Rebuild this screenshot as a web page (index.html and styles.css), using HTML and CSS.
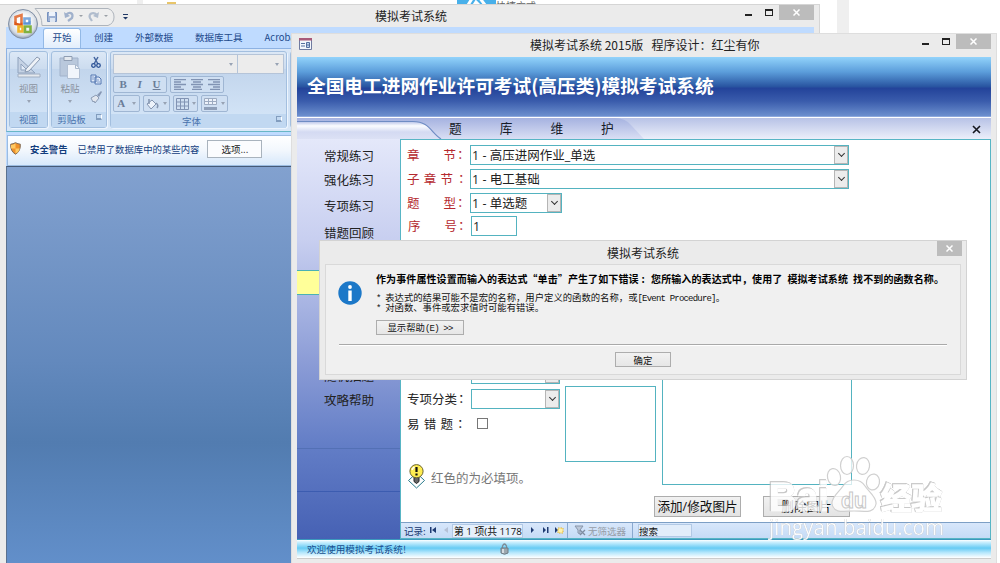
FILE: index.html
```html
<!DOCTYPE html>
<html lang="zh-CN">
<head>
  <meta charset="UTF-8">
  <meta name="viewport" content="width=device-width, initial-scale=1.0">
  <title>模拟考试系统</title>
  <link rel="stylesheet" href="styles.css">
</head>
<body>
  <div class="desktop">
    <!-- Fondo detrás de las ventanas -->
    <div class="backdrop">
      <span class="strip strip-left"></span>
      <span class="folder"></span>
      <span class="shortcut"><svg width="39" height="5"><path d="M11 5 16-3h6l6 8M17 5l2-3 3 3" fill="none" stroke="#fff" stroke-width="3"/></svg></span>
      <span class="shortcut-text">快捷方式</span>
      <span class="strip strip-right"></span>
    </div>

    <!-- Ventana principal de Access -->
    <div class="window access">
      <div class="access-title">
        <div class="quick">
          <svg width="90" height="20" viewBox="0 0 90 20">
            <path d="M1 .5h73a9 9 0 0 1 0 17H8Q8 7 1 .5z" fill="#eee" stroke="#aeb4bc"/>
            <path d="M13.500 4.500h9v9h-9z" fill="#9db1d4" stroke="#7590be"/>
            <path d="M15 4h6v4h-6z" fill="#eef3fb"/><path d="M16 10h5v4h-5z" fill="#dfe7f2"/>
            <path d="M32 7c3-4 8-2 6 3l-4 3" fill="none" stroke="#a0b1cc" stroke-width="2.200"/><path d="m30 4 1 6 5-2z" fill="#a0b1cc"/>
            <path d="M63 7c-4-4-9-1-7 3l2 3" fill="none" stroke="#b0bccd" stroke-width="2.200"/><path d="m65 4-1 6-5-2z" fill="#b0bccd"/>
            <path d="M45 7h4l-2 2zM70 7h4l-2 2z" fill="#9a9fa6"/>
          </svg>
          <svg class="more" width="5" height="6"><path d="M0 0h5v1H0zM0 3h5L2.500 5.500z" fill="#1f3865"/></svg>
        </div>
        <div class="caption">模拟考试系统</div>
        <div class="controls">
          <span class="min"></span><span class="max"></span>
          <span class="close"><svg width="7" height="7"><path d="m.5.5 6 6m0-6-6 6" stroke="#fff" stroke-width="1.500"/></svg></span>
        </div>
      </div>
      <svg class="orb" width="32" height="32" viewBox="0 0 32 32">
        <defs>
          <radialGradient id="orb" cx=".5" cy=".45" r=".55"><stop offset=".4" stop-color="#fff"/><stop offset=".8" stop-color="#d4dae3"/><stop offset="1" stop-color="#8d9bb0"/></radialGradient>
        </defs>
        <circle cx="16" cy="16" r="14.500" fill="url(#orb)" stroke="#8290a5"/>
        <g fill="none" stroke-width="2.600">
          <path d="m8.500 9 6-2v10l-6-1z" stroke="#dd5a1c"/>
          <path d="M17.500 10.500h5v5h-5z" stroke="#5b93d5"/>
          <path d="M11.500 18.500h4v5h-4z" stroke="#f0b52b"/>
          <path d="M18 18.500h5.500V24H18z" stroke="#7fb241"/>
        </g>
        <path d="M4 12Q15 18 28 11A13 13 0 0 0 4 12z" fill="#fff" opacity=".2"/>
      </svg>

      <div class="client">
        <div class="tabs">
          <span class="tab active">开始</span>
          <span class="tab t2">创建</span>
          <span class="tab t3">外部数据</span>
          <span class="tab t4">数据库工具</span>
          <span class="tab t5">Acrobat</span>
        </div>
        <div class="ribbon">
          <div class="group g-view">
            <div class="group-body big">
              <svg width="26" height="24" viewBox="0 0 26 24">
                <path d="M2 2v16h17z" fill="#c5d2e4" stroke="#8fa2bd"/><path d="M5 9v6h6z" fill="#e4edf8" stroke="#8fa2bd"/>
                <path d="M2 19h22v3H2z" fill="#e5e9ee" stroke="#a0aec2"/><path d="m10 14 11-12 3 2-11 12-4 1z" fill="#eef2f7" stroke="#8a9ab2"/>
              </svg>
              <span>视图</span><i class="arrow"></i>
            </div>
            <div class="group-name">视图</div>
          </div>
          <div class="group g-clip">
            <div class="group-body clip">
              <div class="big">
                <svg width="24" height="24" viewBox="0 0 24 24">
                  <path d="M2 3h18v18H2z" fill="#b9c8dc" stroke="#a1b2cb"/><path d="M6 1.500h8v4H6z" fill="#e4e9ef" stroke="#8f9db2"/>
                  <path d="M9.500 9.500h8l4 4v10h-12z" fill="#f1f5fb" stroke="#b1bfd3"/><path d="M17.500 9.500v4h4" fill="none" stroke="#a8b8cc"/>
                </svg>
                <span>粘贴</span><i class="arrow"></i>
              </div>
              <div class="clip-side">
                <svg width="12" height="13" viewBox="0 0 12 13"><path d="m4 1 4 7M8 1 4 8" stroke="#44659f" stroke-width="1.500"/><circle cx="3.500" cy="9.500" r="1.800" fill="none" stroke="#2d5498" stroke-width="1.300"/><circle cx="8.500" cy="9.500" r="1.800" fill="none" stroke="#2d5498" stroke-width="1.300"/></svg>
                <svg width="12" height="12" viewBox="0 0 12 12"><path d="M1 1h5v7H1zM5 3h4l2 2v5H5z" fill="#dfe9f8" stroke="#5376b1"/><path d="M2 3h2M2 5h2M7 6h2M7 8h3" stroke="#7f9dcd"/></svg>
                <svg width="12" height="12" viewBox="0 0 12 12"><path d="m7 4 4-4 1 1-3 5z" fill="#8798b4"/><path d="M1 7l5-3 3 3-4 5-1-2-1 1-1-2z" fill="#e1e6ee" stroke="#8c9cb4"/></svg>
              </div>
            </div>
            <div class="group-name">剪贴板<i class="launch"></i></div>
          </div>
          <div class="group g-font">
            <div class="group-body">
              <div class="fields"><span class="field-font"><i class="arrow"></i></span><span class="field-size"><i class="arrow"></i></span></div>
              <div class="tools">
                <div class="tool w53"><b>B</b><em>I</em><u>U</u></div>
                <div class="tool w53">
                  <svg width="12" height="11"><path d="M0 .5h12M0 3h7M0 5.500h12M0 8h7M0 10.500h10" stroke="#8193b3" stroke-width="1.300"/></svg>
                  <svg width="12" height="11"><path d="M0 .5h12M2 3h8M0 5.500h12M2 8h8M1 10.500h10" stroke="#8193b3" stroke-width="1.300"/></svg>
                  <svg width="12" height="11"><path d="M0 .5h12M5 3h7M0 5.500h12M5 8h7M2 10.500h10" stroke="#8193b3" stroke-width="1.300"/></svg>
                </div>
              </div>
              <div class="tools">
                <div class="tool w27"><b>A</b><i class="arrow"></i></div>
                <div class="tool w27"><svg width="13" height="12"><path d="m1 6 5-4 4 4-5 5z" fill="#edf3fb" stroke="#8596b1"/><path d="M3 1v5M10 5q3 2 1 5" fill="none" stroke="#8596b1" stroke-width="1.500"/></svg><i class="arrow"></i></div>
                <div class="tool w25"><svg width="13" height="12"><path d="M.5.5h12v11H.5zM4.500 0v12M8.500 0v12M0 4h13M0 8h13" fill="none" stroke="#8193b3"/></svg><i class="arrow"></i></div>
                <div class="tool w27"><svg width="13" height="12"><path d="M.5.5h12v6H.5zM4.500 0v6M8.500 0v6M0 3.500h13" fill="#edf2fa" stroke="#9dabc1"/><path d="M0 9h13v3H0z" fill="#8f9fb8"/></svg><i class="arrow"></i></div>
              </div>
            </div>
            <div class="group-name">字体<i class="launch"></i></div>
          </div>
          <div class="group g-next"></div>
        </div>
        <div class="warning">
          <svg width="11" height="13" viewBox="0 0 11 13"><path d="M5.500.7Q8 2 10.300 2.200q.5 7-4.800 10Q.2 9.200.7 2.200 3 2 5.500.7z" fill="#f0912a" stroke="#7f6a55"/><path d="M5.500 1.500v5H1V3q2 0 4.500-1.500zM5.500 6.500H10q-1 3.500-4.500 5z" fill="#ffc962"/></svg>
          <strong>安全警告</strong>
          <span>已禁用了数据库中的某些内容</span>
          <button>选项...</button>
        </div>
        <div class="workspace"></div>
      </div>
    </div>

    <!-- Ventana del formulario -->
    <div class="window exam">
      <div class="exam-title">
        <svg width="13" height="12" viewBox="0 0 13 12"><path d="M.5.5h12v11H.5z" fill="#f4f7fc" stroke="#6f7ba0"/><path d="M0 0h13v2.500H0z" fill="#a85a79"/><path d="M2 5.500h4M2 8h4" stroke="#56709f"/><path d="M7.500 4.500h3v5h-3zM7.500 7h3" fill="#c0d2ee" stroke="#56709f"/></svg>
        <div class="caption">模拟考试系统 2015版&nbsp;&nbsp; 程序设计<span class="mid">：</span>红尘有你</div>
        <div class="controls">
          <span class="min"></span><span class="max"></span>
          <span class="close"><svg width="7" height="7"><path d="m.5.5 6 6m0-6-6 6" stroke="#fff" stroke-width="1.500"/></svg></span>
        </div>
      </div>
      <div class="exam-body">
        <h1 class="banner">全国电工进网作业许可考试(高压类)模拟考试系统</h1>
        <div class="menubar">
          <svg width="350" height="21" viewBox="0 0 350 21">
            <defs>
              <linearGradient id="mtab" x2="0" y2="1"><stop stop-color="#a5b2e0"/><stop offset="1" stop-color="#dadff4"/></linearGradient>
              <linearGradient id="ltab" x2="0" y2="1"><stop stop-color="#b9c3e8"/><stop offset=".25" stop-color="#fbfcff"/><stop offset=".6" stop-color="#d4daf2"/><stop offset="1" stop-color="#dce1f5"/></linearGradient>
            </defs>
            <path d="M0 0h318q10 0 16 7l13 14H0z" fill="url(#mtab)"/>
            <path d="M0 3.500h116c16 0 18 11 28 17.500H0z" fill="url(#ltab)"/>
            <path d="M0 3.500h116c16 0 18 11 28 17.500" fill="none" stroke="#6f8cc4" stroke-width="1.200"/>
          </svg>
          <div class="menu-name"><span>题</span><span>库</span><span>维</span><span>护</span></div>
          <svg class="menu-close" width="9" height="9"><path d="m1 1 7 7m0-7-7 7" stroke="#15171f" stroke-width="1.600"/></svg>
        </div>
        <div class="main">
          <ul class="sidebar">
            <li>常规练习</li>
            <li>强化练习</li>
            <li>专项练习</li>
            <li>错题回顾</li>
            <li class="current"></li>
            <li>随机抽题</li>
            <li>攻略帮助</li>
          </ul>
          <div class="panel">
            <div class="form">
              <div class="row"><label class="req"><span>章</span><span class="push">节</span><span class="mid">：</span></label><div class="combo wide">1 - 高压进网作业_单选<i></i></div></div>
              <div class="row"><label class="req spaced">子章节<span class="mid">：</span></label><div class="combo wide">1 - 电工基础<i></i></div></div>
              <div class="row"><label class="req"><span>题</span><span class="push">型</span><span class="mid">：</span></label><div class="combo type">1 - 单选题<i></i></div></div>
              <div class="row number"><label class="req"><span>序</span><span class="push">号</span><span class="mid">：</span></label><div class="combo num">1</div></div>
              <div class="memo"></div>
              <div class="lower">
                <div class="left">
                  <div class="row"><label></label><div class="combo cat"><i></i></div></div>
                  <div class="row second"><label>专项分类<span class="mid">：</span></label><div class="combo cat"><i></i></div></div>
                  <div class="row third"><label class="spaced">易错题<span class="mid">：</span></label><span class="check"></span></div>
                  <div class="hint">
                    <svg width="19" height="25" viewBox="0 0 19 25">
                      <path d="m9.500 9 8 7.500-8 7.500-8-7.500z" fill="#fff" stroke="#287a8c"/>
                      <path d="M7 13h5v4.500l-2.500 2-2.500-2z" fill="#666" stroke="#222"/>
                      <circle cx="9.500" cy="7.200" r="6.600" fill="#ffed50" stroke="#6b6433"/>
                      <path d="M5 6q1-2.500 2.500-3" fill="none" stroke="#fff" stroke-width="1.500"/><path d="M9.500 3v5M9.500 9.500v2" stroke="#111" stroke-width="2.200"/>
                    </svg>
                    <span>红色的为必填项。</span>
                  </div>
                </div>
                <div class="box small"></div>
                <div class="box large"></div>
              </div>
              <div class="buttons"><button>添加/修改图片</button><button>删除图片</button></div>
            </div>
            <div class="record">
              <span class="rec-label">记录:</span>
              <svg width="24" height="9" viewBox="0 0 24 9"><path d="M0 1h1.500v6H0zM6 1v6L2 4z" fill="#1f3b73"/><path d="M18 1v6l-4-3z" fill="#b5c1d6"/></svg>
              <span class="rec-pos">第 1 项(共 1178</span>
              <svg width="34" height="9" viewBox="0 0 34 9"><path d="M1 1v6l3-3zM13 1v6l3-3zM17 1h1.500v6H17zM25 1v6l3-3z" fill="#1f3b73"/><path d="M28 2h5v5h-5z" fill="#fff2ad" stroke="#e0b232" stroke-dasharray="1.500 1"/></svg>
              <span class="filter"><svg width="12" height="11" viewBox="0 0 12 11"><path d="M1 1h8L6 5v4L4 8V5z" fill="#bcc8d9" stroke="#8795ab"/><path d="m6 5 5 5m0-5-5 5" stroke="#7f8ca0" stroke-width="1.300"/></svg>无筛选器</span>
              <span class="search">搜索</span>
            </div>
          </div>
        </div>
        <div class="status">
          <span>欢迎使用模拟考试系统!</span>
          <svg width="9" height="12" viewBox="0 0 9 12"><path d="M2.500 6V3q2-4 4 0v3" fill="none" stroke="#7c8b96" stroke-width="1.300"/><path d="M1 5h7v5q-3.500 2.500-7 0z" fill="#9ba7ae" stroke="#6e7d86"/><path d="M3 6v4" stroke="#e7edf0" stroke-width="1.500"/></svg>
        </div>
      </div>
    </div>

    <!-- Cuadro de error -->
    <div class="window dialog">
      <div class="dialog-title">
        <div class="caption">模拟考试系统</div>
        <span class="close"><svg width="7" height="7"><path d="m.5.5 6 6m0-6-6 6" stroke="#fff" stroke-width="1.500"/></svg></span>
      </div>
      <div class="dialog-body">
        <div class="message">
          <svg width="24" height="24"><circle cx="12" cy="12" r="11.700" fill="#1c78c8"/><path d="M10.300 9.500h3.400V20h-3.400z" fill="#fff"/><circle cx="12" cy="6" r="1.900" fill="#fff"/></svg>
          <div class="message-text">
            <strong>作为事件属性设置而输入的表达式“单击”产生了如下错误<span class="colon">:</span> 您所输入的表达式中，使用了 模拟考试系统 找不到的函数名称。</strong>
            <p><span class="mono">* </span>表达式的结果可能不是宏的名称，用户定义的函数的名称，或<span class="mono">[Event Procedure]</span>。</p>
            <p><span class="mono">* </span>对函数、事件或宏求值时可能有错误。</p>
            <button class="help">显示帮助<span class="mono">(E) &gt;&gt;</span></button>
          </div>
        </div>
        <hr>
        <button class="ok">确定</button>
      </div>
    </div>

    <!-- Marca de agua -->
    <svg class="watermark" width="184" height="98" viewBox="0 0 184 98">
      <g class="wm-paw">
        <ellipse cx="66" cy="24" rx="6.500" ry="8.500" transform="rotate(-12 66 24)"/>
        <ellipse cx="79" cy="12.500" rx="6.500" ry="9"/>
        <ellipse cx="95" cy="13" rx="6.500" ry="8.500" transform="rotate(8 95 13)"/>
        <ellipse cx="105" cy="29" rx="6.500" ry="8" transform="rotate(12 105 29)"/>
        <path d="M75 33c5-8 17-8 22 0 3 5 12 11 11 18-2 10-12 7-22 7s-20 3-22-7c-1-7 8-13 11-18z"/>
      </g>
      <g class="wm-text">
        <text class="wm-logo" x="1" y="58" textLength="60" lengthAdjust="spacingAndGlyphs">Bai</text>
        <text class="wm-cn" x="113" y="56" textLength="61" lengthAdjust="spacingAndGlyphs">经验</text>
      </g>
      <text class="wm-du" x="73" y="55" textLength="26" lengthAdjust="spacingAndGlyphs">du</text>
      <text class="wm-url" x="1" y="82" textLength="175" lengthAdjust="spacingAndGlyphs">jingyan.baidu.com</text>
    </svg>
  </div>
</body>
</html>
```
FILE: styles.css
```css
/* Reset general */
* {
  box-sizing: border-box;
  margin: 0;
  padding: 0;
}

body {
  background: #fff;
  color: #222;
  font-family: "Noto Sans CJK SC", sans-serif;
  font-size: 12px;
}

svg {
  display: block;
  flex: none;
}

button {
  font-family: inherit;
  color: #111;
  white-space: nowrap;
}

.desktop {
  position: relative;
  width: 1000px;
  height: 563px;
  overflow: hidden;
}

/* Dos puntos centrados en su celda */
.mid {
  font-family: "Noto Sans CJK TC", sans-serif;
}

/* Fondo */
.backdrop {
  display: flex;
  height: 34px;
}

.strip {
  background: #efefef;
  width: 6px;
  margin-left: 137px;
}

.strip-right {
  width: 12px;
  margin-left: 300px;
}

.folder {
  width: 9px;
  height: 4px;
  margin-left: 24px;
  background: linear-gradient(#fff 60%, #e8c56a 60%);
}

.shortcut {
  width: 39px;
  height: 5px;
  margin-left: 281px;
  background: #48b0ea;
}

.shortcut-text {
  width: 41px;
  height: 5px;
  overflow: hidden;
  line-height: 12px;
  font-size: 10px;
  color: #666;
}

/* Ventanas */
.window {
  position: absolute;
  background: #ebebeb;
}

.controls {
  display: flex;
  align-items: flex-start;
}

.min {
  width: 7px;
  height: 2px;
  margin-top: 9px;
  background: #222;
}

.max {
  width: 8px;
  height: 7px;
  margin: 4px 6px 0 13px;
  border: 1px solid #222;
  border-top-width: 2px;
}

.close {
  display: flex;
  align-items: center;
  justify-content: center;
  width: 35px;
  height: 15px;
  background: #bcbcbc;
}

/* Access */
.access {
  left: 0;
  top: 4px;
  width: 820px;
  height: 559px;
  border-top: 1px solid #d5d5d5;
  border-right: 1px solid #d5d5d5;
}

.access-title {
  display: flex;
  height: 22px;
  padding-left: 34px;
}

.quick {
  display: flex;
  width: 341px;
  padding-top: 3px;
}

.more {
  margin: 6px 0 0 -1px;
}

.access-title .caption {
  width: 370px;
  line-height: 22px;
}

.orb {
  position: absolute;
  left: 7px;
  top: 3px;
}

.client {
  width: 808px;
  margin-left: 6px;
  background: #bfdbff;
}

.tabs {
  display: flex;
  height: 21px;
  padding-left: 37px;
  font-size: 9.5px;
  color: #1d4a8c;
  line-height: 20px;
}

.tab.active {
  width: 38px;
  margin-top: 1px;
  text-align: center;
  line-height: 17px;
  border: 1px solid #93b9e6;
  border-bottom: none;
  border-radius: 3px 3px 0 0;
  background: linear-gradient(#fff, #e2eefc);
}

.t2 {
  margin-left: 13px;
}

.t3 {
  margin-left: 22px;
}

.t4 {
  margin-left: 22px;
}

.t5 {
  margin-left: 22px;
}

.ribbon {
  display: flex;
  height: 84px;
  padding: 2px 0 3px 3px;
  gap: 3px;
  border: 1px solid #8db2e3;
  border-bottom-color: #68b7c6;
  background: linear-gradient(#dbe8f7, #c7daf1 20%, #d9e8f8);
}

.group {
  display: flex;
  flex-direction: column;
  flex: none;
  border: 1px solid #a3bfdf;
  border-radius: 3px;
  background: linear-gradient(#dce8f6, #ccdcef 22%, #c2d5ec 23%, #d6e7f9);
  box-shadow: 1px 1px 0 #edf5fe;
}

.g-view {
  width: 39px;
  margin-left: -1px;
}

.g-clip {
  width: 56px;
}

.g-font {
  width: 177px;
}

.g-next {
  width: 300px;
}

.group-body {
  flex: 1;
}

.group-name {
  display: flex;
  justify-content: center;
  position: relative;
  height: 15px;
  background: #c1d8f1;
  color: #4873ad;
  font-size: 9.5px;
  line-height: 14px;
}

.g-clip .group-name {
  padding-right: 15px;
}

.g-font .group-name {
  padding-right: 14px;
}

.launch {
  position: absolute;
  right: 4px;
  top: 2px;
  width: 6px;
  height: 6px;
  border: 1px solid #829dbe;
  border-right-color: #fff;
  border-bottom: 2px solid #829dbe;
}

.big {
  display: flex;
  flex-direction: column;
  align-items: center;
  padding-top: 3px;
  color: #8b93a0;
  font-size: 9.5px;
  line-height: 18px;
}

.arrow {
  width: 0;
  height: 0;
  border: 2px solid transparent;
  border-top: 3px solid #98a3b4;
  border-bottom: 0;
}

.big .arrow {
  margin-top: 3px;
}

.clip {
  display: flex;
  padding-left: 4px;
}

.clip .big {
  width: 28px;
}

.clip-side {
  display: flex;
  flex-direction: column;
  gap: 5px;
  padding: 4px 0 0 6px;
}

.g-font .group-body {
  padding: 2px;
}

.fields {
  display: flex;
}

.fields span {
  display: flex;
  justify-content: flex-end;
  align-items: center;
  width: 125px;
  height: 20px;
  padding-right: 4px;
  border: 1px solid #b5c4d8;
  background: #ececec;
}

.fields .field-size {
  width: 47px;
  margin-left: -1px;
}

.tools {
  display: flex;
  gap: 3px;
  margin-top: 2px;
}

.tool {
  display: flex;
  align-items: center;
  justify-content: space-around;
  height: 17px;
  border: 1px solid #9fb6d3;
  border-radius: 2px;
  background: #cfdff2;
  color: #6a7c98;
  font: 700 11px/15px "Liberation Serif", serif;
}

.w53 {
  width: 54px;
}

.w27 {
  width: 27px;
}

.w25 {
  width: 25px;
}

.warning {
  display: flex;
  align-items: center;
  height: 31px;
  margin: 3px 0 1px 1px;
  padding-left: 3px;
  border: 1px solid #9bbbe0;
  background: linear-gradient(#fff, #f2f7fd 50%, #d7e8fb);
  color: #123d7d;
  font-size: 9.4px;
}

.warning > * {
  position: relative;
  top: -2px;
}

.warning svg {
  margin-left: -1px;
}

.warning strong {
  margin: 0 10px 0 9px;
}

.warning button {
  width: 55px;
  height: 18px;
  margin-left: 8px;
  border: 1px solid #a9b3bd;
  background: #fbfcfe;
  font-size: 9.5px;
  line-height: 14px;
  color: #222;
}

.workspace {
  height: 400px;
  margin-top: -1px;
  border-top: 1px solid #455a78;
  border-left: 1px solid #5a718f;
  background: linear-gradient(#82a1cf, #6389bd 194px, #527cb0 276px, #628fca 396px);
}

/* Formulario */
.exam {
  left: 291px;
  top: 33px;
  width: 706px;
  height: 530px;
  border: 1px solid #dedede;
  border-bottom: none;
}

.exam-title {
  display: flex;
  height: 23px;
  padding-left: 7px;
}

.exam-title > svg {
  margin-top: 4px;
}

.exam-title .caption {
  width: 392px;
  margin-left: 218px;
  line-height: 22px;
  white-space: pre;
}

.exam-body {
  width: 694px;
  height: 502px;
  margin-left: 5px;
  border-bottom: 1px solid #ccc;
}

.banner {
  height: 60px;
  padding-left: 10px;
  border-bottom: 1px solid #8ea8dc;
  background: linear-gradient(#92d3fb, #5c9edb 25%, #2955a1 50%, #23439a 53%, #3a5cac 75%, #6c8fce);
  color: #fff;
  font-size: 18.7px;
  font-weight: 700;
  line-height: 55px;
  white-space: nowrap;
}

.menubar {
  position: relative;
  display: flex;
  align-items: center;
  height: 22px;
  border-top: 1px solid #fff;
  background: linear-gradient(#b7c2e6, #eceffa);
}

.menu-name {
  display: flex;
  gap: 38px;
  margin: -2px 0 0 -198px;
  font-size: 12.7px;
  line-height: 18px;
  color: #161b28;
  z-index: 1;
}

.menu-close {
  margin: 2px 10px 0 auto;
}

.main {
  display: flex;
  height: 400px;
}

.sidebar {
  width: 103px;
  padding-top: 7px;
  list-style: none;
  font-size: 12.5px;
  line-height: 20px;
  background:
    linear-gradient(#5370b5, #5370b5) 0 309px / 100% 1px no-repeat,
    linear-gradient(#3c5cb0, #3c5cb0) 0 352px / 100% 1px no-repeat,
    linear-gradient(#e4e8fa, #c8cff0 25%, #8b9cd6 56%, #627dc6 77%, #4661b4);
}

.sidebar li {
  height: 20px;
  padding-left: 27px;
  margin-top: 4px;
}

.sidebar li:nth-child(1) {
  margin-top: 0;
}

.sidebar li:nth-child(3) {
  margin-top: 6px;
}

.sidebar li:nth-child(4) {
  margin-top: 7px;
}

.sidebar .current {
  height: 25px;
  margin-top: 27px;
  border: solid #4ab1b5;
  border-width: 1px 0;
  background: #ffff99;
}

.sidebar li:nth-child(6) {
  margin-top: 71px;
}

.panel {
  display: flex;
  flex-direction: column;
  width: 591px;
  border: 1px solid #58b5c5;
  background: #fff;
}

.form {
  flex: 1;
  padding: 5px 0 0 6px;
  font-size: 12.5px;
}

.row {
  display: flex;
  height: 20px;
  margin-bottom: 4px;
  line-height: 19px;
}

.row label {
  display: flex;
  flex: none;
  width: 63px;
  color: #222;
  white-space: nowrap;
}

.row .req {
  color: #b5292e;
}

.push {
  margin-left: 24px;
}

.row .spaced {
  letter-spacing: 4.2px;
}

.spaced .mid {
  margin-left: -3px;
}

.row .req .mid,
.second .mid {
  margin-left: -2px;
}

.combo {
  display: flex;
  justify-content: space-between;
  flex: none;
  padding-left: 1px;
  border: 1px solid #54b3c0;
  font-family: "Open Sans", "Noto Sans CJK SC", sans-serif;
  line-height: 19px;
  white-space: pre;
}

.combo i {
  display: flex;
  align-items: center;
  justify-content: center;
  width: 14px;
  margin-left: auto;
  border: 1px solid #b5b5b5;
  background: #ececec;
}

.combo i::before {
  content: "";
  width: 4px;
  height: 4px;
  margin-top: -3px;
  border: solid #333;
  border-width: 0 1.5px 1.5px 0;
  transform: rotate(45deg);
}

.wide {
  width: 379px;
}

.type {
  width: 92px;
}

.num {
  width: 46px;
}

.number {
  margin-top: -1px;
  padding-left: 1px;
}

.memo {
  width: 380px;
  height: 100px;
  margin-left: 64px;
  border: 1px solid #54b3c0;
}

.lower {
  display: flex;
  height: 152px;
}

.left {
  width: 158px;
  padding-top: 24px;
}

.left .row {
  margin-bottom: 5px;
}

.left .row label {
  width: 64px;
}

.cat {
  width: 89px;
}

.check {
  width: 11px;
  height: 11px;
  margin: 4px 0 0 6px;
  border: 1px solid #777;
}

.left .third {
  margin-bottom: 3px;
}

.hint {
  display: flex;
  align-items: flex-start;
  gap: 5px;
  height: 30px;
  margin-top: 30px;
  color: #777;
  white-space: nowrap;
}

.hint span {
  padding-top: 5px;
  line-height: 18px;
}

.box {
  flex: none;
  border: 1px solid #54b3c0;
}

.small {
  width: 91px;
  height: 76px;
  margin-top: 46px;
}

.large {
  width: 190px;
  height: 145px;
  margin-left: 6px;
}

.buttons {
  display: flex;
  gap: 22px;
  padding: 4px 0 0 247px;
}

.buttons button {
  width: 87px;
  height: 21px;
  border: 1px solid #adadad;
  background: linear-gradient(#f1f1f1, #e3e3e3);
  font-family: "Open Sans", "Noto Sans CJK SC", sans-serif;
  font-size: 12.6px;
  line-height: 18px;
}

.record {
  display: flex;
  align-items: center;
  height: 16px;
  padding-left: 3px;
  border-top: 1px solid #7d9fc5;
  background: linear-gradient(#d8e7fb, #c5dbf6);
  color: #17376f;
  font-size: 9.5px;
  line-height: 14px;
  white-space: nowrap;
}

.rec-label {
  width: 26px;
}

.rec-pos {
  width: 71px;
  height: 14px;
  margin: 0 7px 0 -2px;
  padding-left: 1px;
  overflow: hidden;
  border: 1px solid #b2c9e5;
  background: #e6f0fc;
  color: #111;
  font-family: "Open Sans", "Noto Sans CJK SC", sans-serif;
  font-size: 9.8px;
  line-height: 13px;
}

.filter {
  display: flex;
  align-items: center;
  gap: 2px;
  width: 66px;
  height: 15px;
  margin-left: 3px;
  padding-left: 6px;
  border: solid #8aa9cf;
  border-width: 0 1px;
  color: #969ca6;
}

.search {
  width: 54px;
  height: 13px;
  margin-left: 5px;
  border: 1px solid #b2c9e5;
  background: #e2edfa;
  color: #111;
  line-height: 12px;
}

.status {
  display: flex;
  align-items: center;
  height: 19px;
  padding-left: 10px;
  border-top: 1px solid #3c98bd;
  background: linear-gradient(#fff, #d2f2ff 10%, #66cbf4 45%, #b5e7fc 70%, #fff);
  color: #194f8f;
  font-size: 9.6px;
  line-height: 16px;
}

.status span {
  width: 193px;
}

/* Cuadro de error */
.dialog {
  left: 319px;
  top: 240px;
  width: 648px;
  height: 140px;
  padding: 0 5px;
  border: 1px solid #d3d3d3;
}

.dialog-title {
  display: flex;
  justify-content: flex-end;
  height: 23px;
  margin-right: -1px;
}

.dialog-title .caption {
  width: 330px;
  line-height: 23px;
}

.dialog-title .close {
  width: 25px;
}

.dialog-body {
  height: 111px;
  padding: 6px 13px;
  border: 1px solid #d9d9d9;
  background: #f0f0f0;
}

.message {
  display: flex;
  gap: 14px;
  height: 73px;
  margin-left: -1px;
}

.message > svg {
  margin-top: 10px;
}

.message-text {
  font-size: 9.35px;
  color: #111;
  white-space: nowrap;
}

.message-text strong {
  display: block;
  height: 21px;
  font-size: 10px;
  letter-spacing: 0.1px;
  word-spacing: 2.7px;
  line-height: 15px;
  color: #000;
}

.colon {
  margin: 0 1px 0 3px;
}

.message-text p {
  height: 10px;
  line-height: 10px;
}

.mono {
  font-family: "Liberation Mono", monospace;
  font-size: 9px;
  letter-spacing: -0.8px;
}

.help,
.ok {
  display: block;
  height: 15px;
  border: 1px solid #adadad;
  background: linear-gradient(#f2f2f2, #e6e6e6);
  font-size: 9.4px;
  line-height: 12px;
}

.help {
  width: 88px;
  margin-top: 8px;
}

.dialog-body hr {
  border: none;
  border-top: 1px solid #a9a9a9;
  border-bottom: 1px solid #fff;
}

.ok {
  width: 56px;
  margin: 6px 0 0 276px;
}

/* Marca de agua */
.watermark {
  position: absolute;
  left: 768px;
  top: 453px;
}

.wm-paw {
  fill: #fff;
  fill-opacity: 0.75;
  stroke: #d0d0d0;
  stroke-width: 1.2;
}

.wm-text {
  fill: #fff;
  stroke: #fff;
  stroke-width: 1.5;
  opacity: 0.8;
  filter: drop-shadow(0.7px 0.7px 0.3px #aaa) drop-shadow(-0.7px -0.7px 0.3px #bbb);
}

.wm-logo {
  font: 700 41px "Liberation Sans", sans-serif;
}

.wm-du {
  fill: #fff;
  stroke: #c6c6c6;
  stroke-width: 1;
  font: 700 22px "Liberation Sans", sans-serif;
}

.wm-cn {
  font: 700 30px "Noto Sans CJK SC", sans-serif;
}

.wm-url {
  fill: #fff;
  opacity: 0.9;
  filter: drop-shadow(0 0 0.7px #999);
  font: 22px "Open Sans", sans-serif;
}
```
